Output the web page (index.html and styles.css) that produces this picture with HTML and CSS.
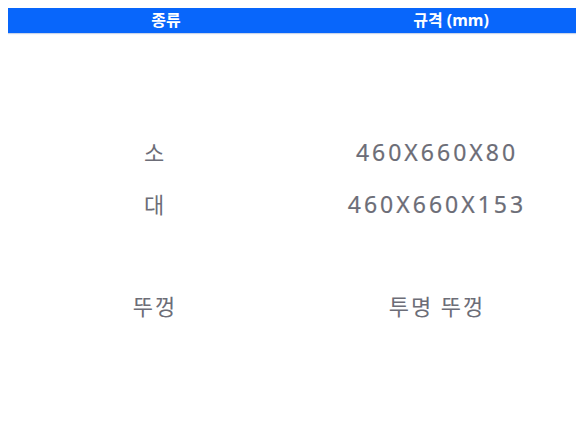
FILE: index.html
```html
<!DOCTYPE html>
<html lang="ko">
<head>
  <meta charset="UTF-8">
  <title>규격</title>
  <link rel="stylesheet" href="styles.css">
</head>
<body>
<div class="spec">
  <div class="spec-head">
    <span>종류</span>
    <span>규격 (mm)</span>
  </div>
  <div class="spec-body">
    <div class="row"><span>소</span><span class="num">460X660X80</span></div>
    <div class="row"><span>대</span><span class="num">460X660X153</span></div>
    <div class="row empty"></div>
    <div class="row"><span>뚜껑</span><span>투명 뚜껑</span></div>
  </div>
</div>
</body>
</html>
```

FILE: styles.css
```css
* {
  margin: 0;
  padding: 0;
}

body {
  margin: 8px;
  background: #fff;
  font-family: "Noto Sans", "Noto Sans CJK KR", sans-serif;
}

.spec {
  width: 570px;
}

.spec-head {
  display: grid;
  grid-template-columns: 316px 254px;
  height: 25px;
  background-color: #0866fb;
  color: #fff;
  font-size: 16px;
  font-weight: bold;
  line-height: 25px;
  text-align: center;
  box-shadow: 0 1px 1px #c8d4ea;
}

.spec-body {
  padding-top: 93px;
}

.row {
  display: grid;
  grid-template-columns: 294px 270px;
  height: 52px;
  line-height: 52px;
  text-align: center;
  color: #6c6d77;
  font-size: 22px;
  letter-spacing: 2px;
}

.row.empty {
  height: 50px;
}

.row .num {
  font-size: 23px;
  letter-spacing: 3px;
  -webkit-text-stroke: 0.2px #6c6d77;
}
```
